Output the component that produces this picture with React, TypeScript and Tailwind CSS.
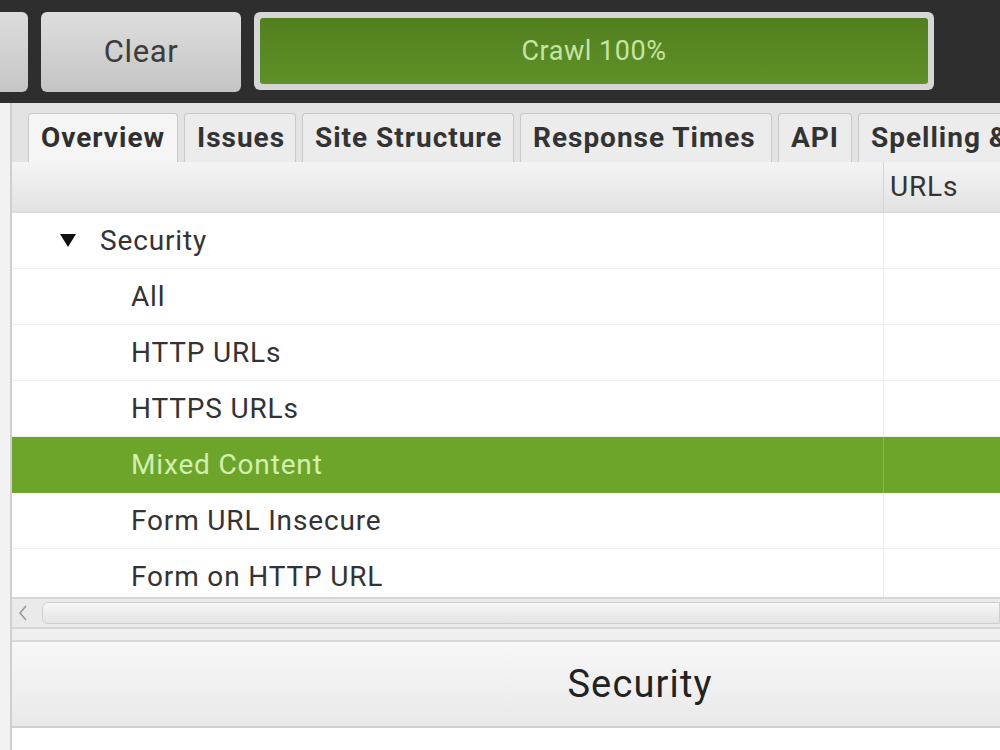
const tabs = [
  { label: "Overview", width: "w-[150px]", active: true },
  { label: "Issues", width: "w-[112px]" },
  { label: "Site Structure", width: "w-[212px]" },
  { label: "Response Times", width: "w-[252px]" },
  { label: "API", width: "w-[74px]" },
  { label: "Spelling & Grammar", width: "w-[300px]" },
];

const rows = [
  { label: "Security", parent: true },
  { label: "All" },
  { label: "HTTP URLs" },
  { label: "HTTPS URLs" },
  { label: "Mixed Content", selected: true },
  { label: "Form URL Insecure" },
  { label: "Form on HTTP URL" },
];

export default function App() {
  return (
    <div className="flex h-[750px] w-[1000px] flex-col overflow-hidden bg-white font-['Roboto',sans-serif] text-[#333]">
      {/* top toolbar */}
      <div className="flex h-[103px] shrink-0 gap-[13px] bg-[#2e2e2e] pt-[12px]">
        <div className="h-[80px] w-[28px] shrink-0 rounded-r-[6px] bg-[linear-gradient(180deg,#dcdcdc,#c6c6c6)]" />
        <div className="flex h-[80px] w-[200px] shrink-0 items-center justify-center rounded-[6px] bg-[linear-gradient(180deg,#dedede,#c4c4c4)] text-[31px] tracking-[0.02em] text-[#3c3c3c]">
          Clear
        </div>
        <div className="h-[78px] w-[680px] shrink-0 rounded-[6px] bg-[#d6d6d6] p-[6px]">
          <div className="flex h-full items-center justify-center rounded-[3px] bg-[linear-gradient(180deg,#527f1f,#5e9127)] text-[27px] tracking-[0.02em] text-[#c6e4a2]">
            Crawl 100%
          </div>
        </div>
      </div>

      <div className="flex flex-1">
        {/* left strip */}
        <div className="w-[12px] shrink-0 border-r-2 border-[#cfcfcf] bg-[#f2f2f2]" />

        <div className="flex flex-1 flex-col overflow-hidden">
          {/* tabs */}
          <div className="flex h-[59px] shrink-0 items-end gap-[6px] bg-[#e3e3e3] pl-[16px]">
            {tabs.map((tab) => (
              <div
                key={tab.label}
                className={`flex h-[49px] shrink-0 items-center rounded-t-[4px] border border-b-0 border-[#c8c8c8] pl-[12px] text-[28px] font-bold tracking-[0.035em] whitespace-nowrap ${tab.width} ${
                  tab.active ? "bg-[#f5f5f5] text-[#2f2f2f]" : "bg-[#ececec] text-[#333]"
                }`}
              >
                {tab.label}
              </div>
            ))}
          </div>

          {/* column header */}
          <div className="flex h-[51px] shrink-0 border-b-2 border-[#dcdcdc] bg-[linear-gradient(180deg,#f4f4f4,#e2e2e2)]">
            <div className="w-[872px] shrink-0 border-r border-[#d4d4d4]" />
            <div className="flex items-center pl-[6px] text-[28px] tracking-[0.03em] text-[#333]">URLs</div>
          </div>

          {/* rows */}
          <div className="flex h-[384px] shrink-0 flex-col overflow-hidden">
            {rows.map((row, i) => (
              <div
                key={row.label}
                className={`flex h-[56px] shrink-0 ${
                  row.selected ? "bg-[#6da52a] text-[#d3efb0]" : "text-[#333]"
                } ${i < rows.length - 1 && !row.selected ? "border-b border-[#ececec]" : ""}`}
              >
                <div
                  className={`flex w-[872px] shrink-0 items-center border-r ${
                    row.selected ? "border-[#86bb4a]" : "border-[#ececec]"
                  } ${row.parent ? "pl-[48px]" : "pl-[119px]"} text-[28px] tracking-[0.03em]`}
                >
                  {row.parent && (
                    <span className="mr-[24px] inline-block h-0 w-0 border-x-[8px] border-t-[13px] border-x-transparent border-t-[#111]" />
                  )}
                  {row.label}
                </div>
                <div className="flex-1" />
              </div>
            ))}
          </div>

          {/* horizontal scrollbar */}
          <div className="flex h-[32px] shrink-0 items-center gap-[14px] border-y-2 border-[#d6d6d6] bg-[#eaeaea] pl-[6px]">
            <svg width="10" height="18" viewBox="0 0 10 18" className="shrink-0">
              <path d="M8 2 L2 9 L8 16" fill="none" stroke="#999" strokeWidth="1.6" />
            </svg>
            <div className="h-[22px] flex-1 rounded-l-[6px] border border-[#cfcfcf] bg-[linear-gradient(180deg,#f6f6f6,#e4e4e4)]" />
          </div>

          <div className="h-[13px] shrink-0 border-b-2 border-[#d8d8d8] bg-[#efefef]" />

          {/* lower panel header */}
          <div className="flex h-[86px] w-[1256px] shrink-0 items-center justify-center border-b-2 border-[#d0d0d0] bg-[linear-gradient(180deg,#f7f7f7,#e9e9e9)] text-[38px] tracking-[0.03em] text-[#222]">
            Security
          </div>

          <div className="flex-1 bg-white" />
        </div>
      </div>
    </div>
  );
}
